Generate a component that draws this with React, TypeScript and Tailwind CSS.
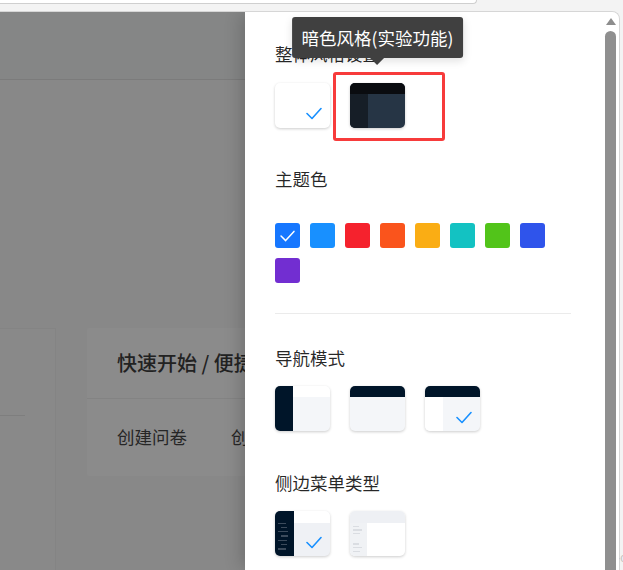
function Check({ className }: { className?: string }) {
  return (
    <svg
      viewBox="0 0 16 13"
      className={className}
      fill="none"
      stroke="currentColor"
      strokeWidth="1.6"
      strokeLinecap="round"
      strokeLinejoin="round"
    >
      <path d="M1 6.5 L6 11.5 L15 1.5" />
    </svg>
  );
}

function Title({ children, className = "" }: { children: React.ReactNode; className?: string }) {
  return (
    <div className={`text-[17.5px] leading-[27.5px] text-black/85 ${className}`}>{children}</div>
  );
}

const thumb =
  "relative w-[55px] h-[45px] rounded-[5px] overflow-hidden shadow-[0_1px_3px_rgba(0,0,0,0.2)]";

const colors = [
  "#1677ff",
  "#1890ff",
  "#f5222d",
  "#fa541c",
  "#faad14",
  "#13c2c2",
  "#52c41a",
  "#2f54eb",
  "#722ed1",
];

const darkLines = [8, 6, 10, 7, 9, 6, 8];

export default function App() {
  return (
    <div className="relative w-[623px] h-[570px] overflow-hidden bg-[#f3f3f3] font-['Noto_Sans_CJK_SC','Noto_Sans',sans-serif]">
      {/* browser strip */}
      <div className="h-[11px]">
        <div className="w-[477px] h-[4px] bg-white border-b border-r border-[#cfcfcf] rounded-br-[4px]" />
      </div>

      <div className="flex h-[559px] mr-[3px] rounded-tr-[8px] overflow-hidden border-t border-r border-[#d6d6d6]">
        {/* masked page */}
        <div className="w-[245px] shrink-0 flex flex-col bg-[#888888] overflow-hidden">
          <div className="h-[68px] shrink-0 bg-[#858686] border-b border-[#7b7b7b]" />
          <div className="flex pt-[248px] flex-1">
            <div className="w-[56px] shrink-0 bg-[#898989] border-t border-r border-[#848484] flex flex-col">
              <div className="h-[86px]" />
              <div className="w-[25px] h-px bg-[#7e7e7e]" />
            </div>
            <div className="ml-[31px] w-[400px] shrink-0 self-start bg-[#8b8b8b] rounded-[2px]">
              <div className="h-[71px] flex items-center px-[30px] border-b border-[#838383] text-[20px] font-medium text-[#222]">
                快速开始 / 便捷
              </div>
              <div className="h-[77px] flex items-center gap-[44px] px-[30px] text-[17.5px] text-[#262626]">
                <span>创建问卷</span>
                <span>创建</span>
              </div>
            </div>
          </div>
        </div>

        {/* drawer */}
        <div className="relative z-10 flex-1 flex bg-white shadow-[-6px_0_16px_-2px_rgba(0,0,0,0.18)]">
          <div className="w-[356px] shrink-0 px-[30px] pt-[28px]">
            <Title>整体风格设置</Title>
            <div className="mt-[15.5px] flex gap-[20px]">
              <div className={`${thumb} bg-white`}>
                <Check className="absolute left-[31px] top-[24px] w-[16px] h-[13px] text-[#1890ff]" />
              </div>
              <div className="relative">
                <div className={`${thumb} bg-[#263545] flex flex-col`}>
                  <div className="h-[11px] bg-[#0a0c10]" />
                  <div className="flex-1 flex">
                    <div className="w-[18px] bg-[#161e27]" />
                  </div>
                </div>
                {/* tooltip */}
                <div className="absolute left-1/2 -translate-x-1/2 bottom-[63px] flex flex-col items-center">
                  <div className="whitespace-nowrap rounded-[3px] bg-[#404040] px-[10px] py-[7px] text-[17.5px] leading-[27.5px] text-white shadow-[0_3px_8px_rgba(0,0,0,0.12)]">
                    暗色风格(实验功能)
                  </div>
                  <div className="w-0 h-0 border-l-[7px] border-r-[7px] border-t-[7px] border-l-transparent border-r-transparent border-t-[#404040]" />
                </div>
                {/* annotation */}
                <div className="absolute left-[-17px] top-[-11px] w-[112px] h-[69px] border-[3px] border-[#f73b3b] rounded-[3px]" />
              </div>
            </div>

            <Title className="mt-[37px]">主题色</Title>
            <div className="mt-[30px] flex flex-wrap gap-[10px]">
              {colors.map((c, i) => (
                <div
                  key={c}
                  className="w-[25px] h-[25px] rounded-[3px] flex items-start pl-[5px] pt-[7px]"
                  style={{ backgroundColor: c }}
                >
                  {i === 0 && <Check className="w-[15px] h-[12px] text-white" />}
                </div>
              ))}
            </div>
            <div className="mt-[30px] h-px bg-[#ebebeb]" />

            <Title className="mt-[30.5px]">导航模式</Title>
            <div className="mt-[14px] flex gap-[20px]">
              <div className={`${thumb} flex bg-[#f4f6f9]`}>
                <div className="w-[18px] bg-[#001529]" />
                <div className="flex-1 flex flex-col">
                  <div className="h-[11px] bg-white" />
                </div>
              </div>
              <div className={`${thumb} flex flex-col bg-[#f4f6f9]`}>
                <div className="h-[11px] bg-[#001529]" />
              </div>
              <div className={`${thumb} flex flex-col bg-[#f4f6f9]`}>
                <div className="h-[11px] bg-[#001529]" />
                <div className="flex-1 flex">
                  <div className="w-[18px] bg-white" />
                </div>
                <Check className="absolute left-[31px] top-[25px] w-[16px] h-[13px] text-[#1890ff]" />
              </div>
            </div>

            <Title className="mt-[38px]">侧边菜单类型</Title>
            <div className="mt-[14.5px] flex gap-[20px]">
              <div className={`${thumb} flex bg-[#eff1f5]`}>
                <div className="w-[19px] bg-[#001529] flex flex-col gap-[3px] pt-[12px] pl-[3px]">
                  {darkLines.map((w, i) => (
                    <div
                      key={i}
                      className="h-[1.3px] bg-[#3c4b5c]"
                      style={{ width: w, marginLeft: i % 2 ? 3 : 0 }}
                    />
                  ))}
                </div>
                <div className="flex-1 flex flex-col">
                  <div className="h-[12px] bg-white" />
                </div>
                <Check className="absolute left-[31px] top-[25px] w-[16px] h-[13px] text-[#1890ff]" />
              </div>
              <div className={`${thumb} flex flex-col bg-white`}>
                <div className="h-[12px] bg-[#eef0f4]" />
                <div className="flex-1 flex">
                  <div className="w-[17px] bg-[#f0f2f5] flex flex-col gap-[2.5px] pt-[3px] pl-[3px]">
                    <div className="w-[6px] h-[1.3px] bg-[#dadde2]" />
                    <div className="w-[9px] h-[1.3px] bg-[#dadde2]" />
                    <div className="w-[7px] h-[1.3px] bg-[#dadde2]" />
                    <div className="h-[4px]" />
                    <div className="w-[6px] h-[1.3px] bg-[#dadde2]" />
                    <div className="w-[9px] h-[1.3px] bg-[#dadde2]" />
                    <div className="w-[7px] h-[1.3px] bg-[#dadde2]" />
                  </div>
                </div>
              </div>
            </div>
          </div>

          {/* scrollbar */}
          <div className="flex-1 flex flex-col pl-[4px] pr-[3px] pt-[6px]">
            <svg viewBox="0 0 10 7" className="ml-[1px] w-[10px] h-[7px] text-[#8d8d8d]">
              <path d="M5 0 L10 7 L0 7 Z" fill="currentColor" />
            </svg>
            <div className="mt-[6px] flex-1 w-[11px] rounded-t-full bg-[#8f8f8f]" />
          </div>
        </div>
      </div>

      {/* watermark */}
      <div className="absolute left-[548px] top-[551px] whitespace-nowrap text-[12px] leading-[14px] text-[#c4c4c4] font-['Liberation_Sans',sans-serif]">
        CSDN @Zwj-coder
      </div>
    </div>
  );
}
